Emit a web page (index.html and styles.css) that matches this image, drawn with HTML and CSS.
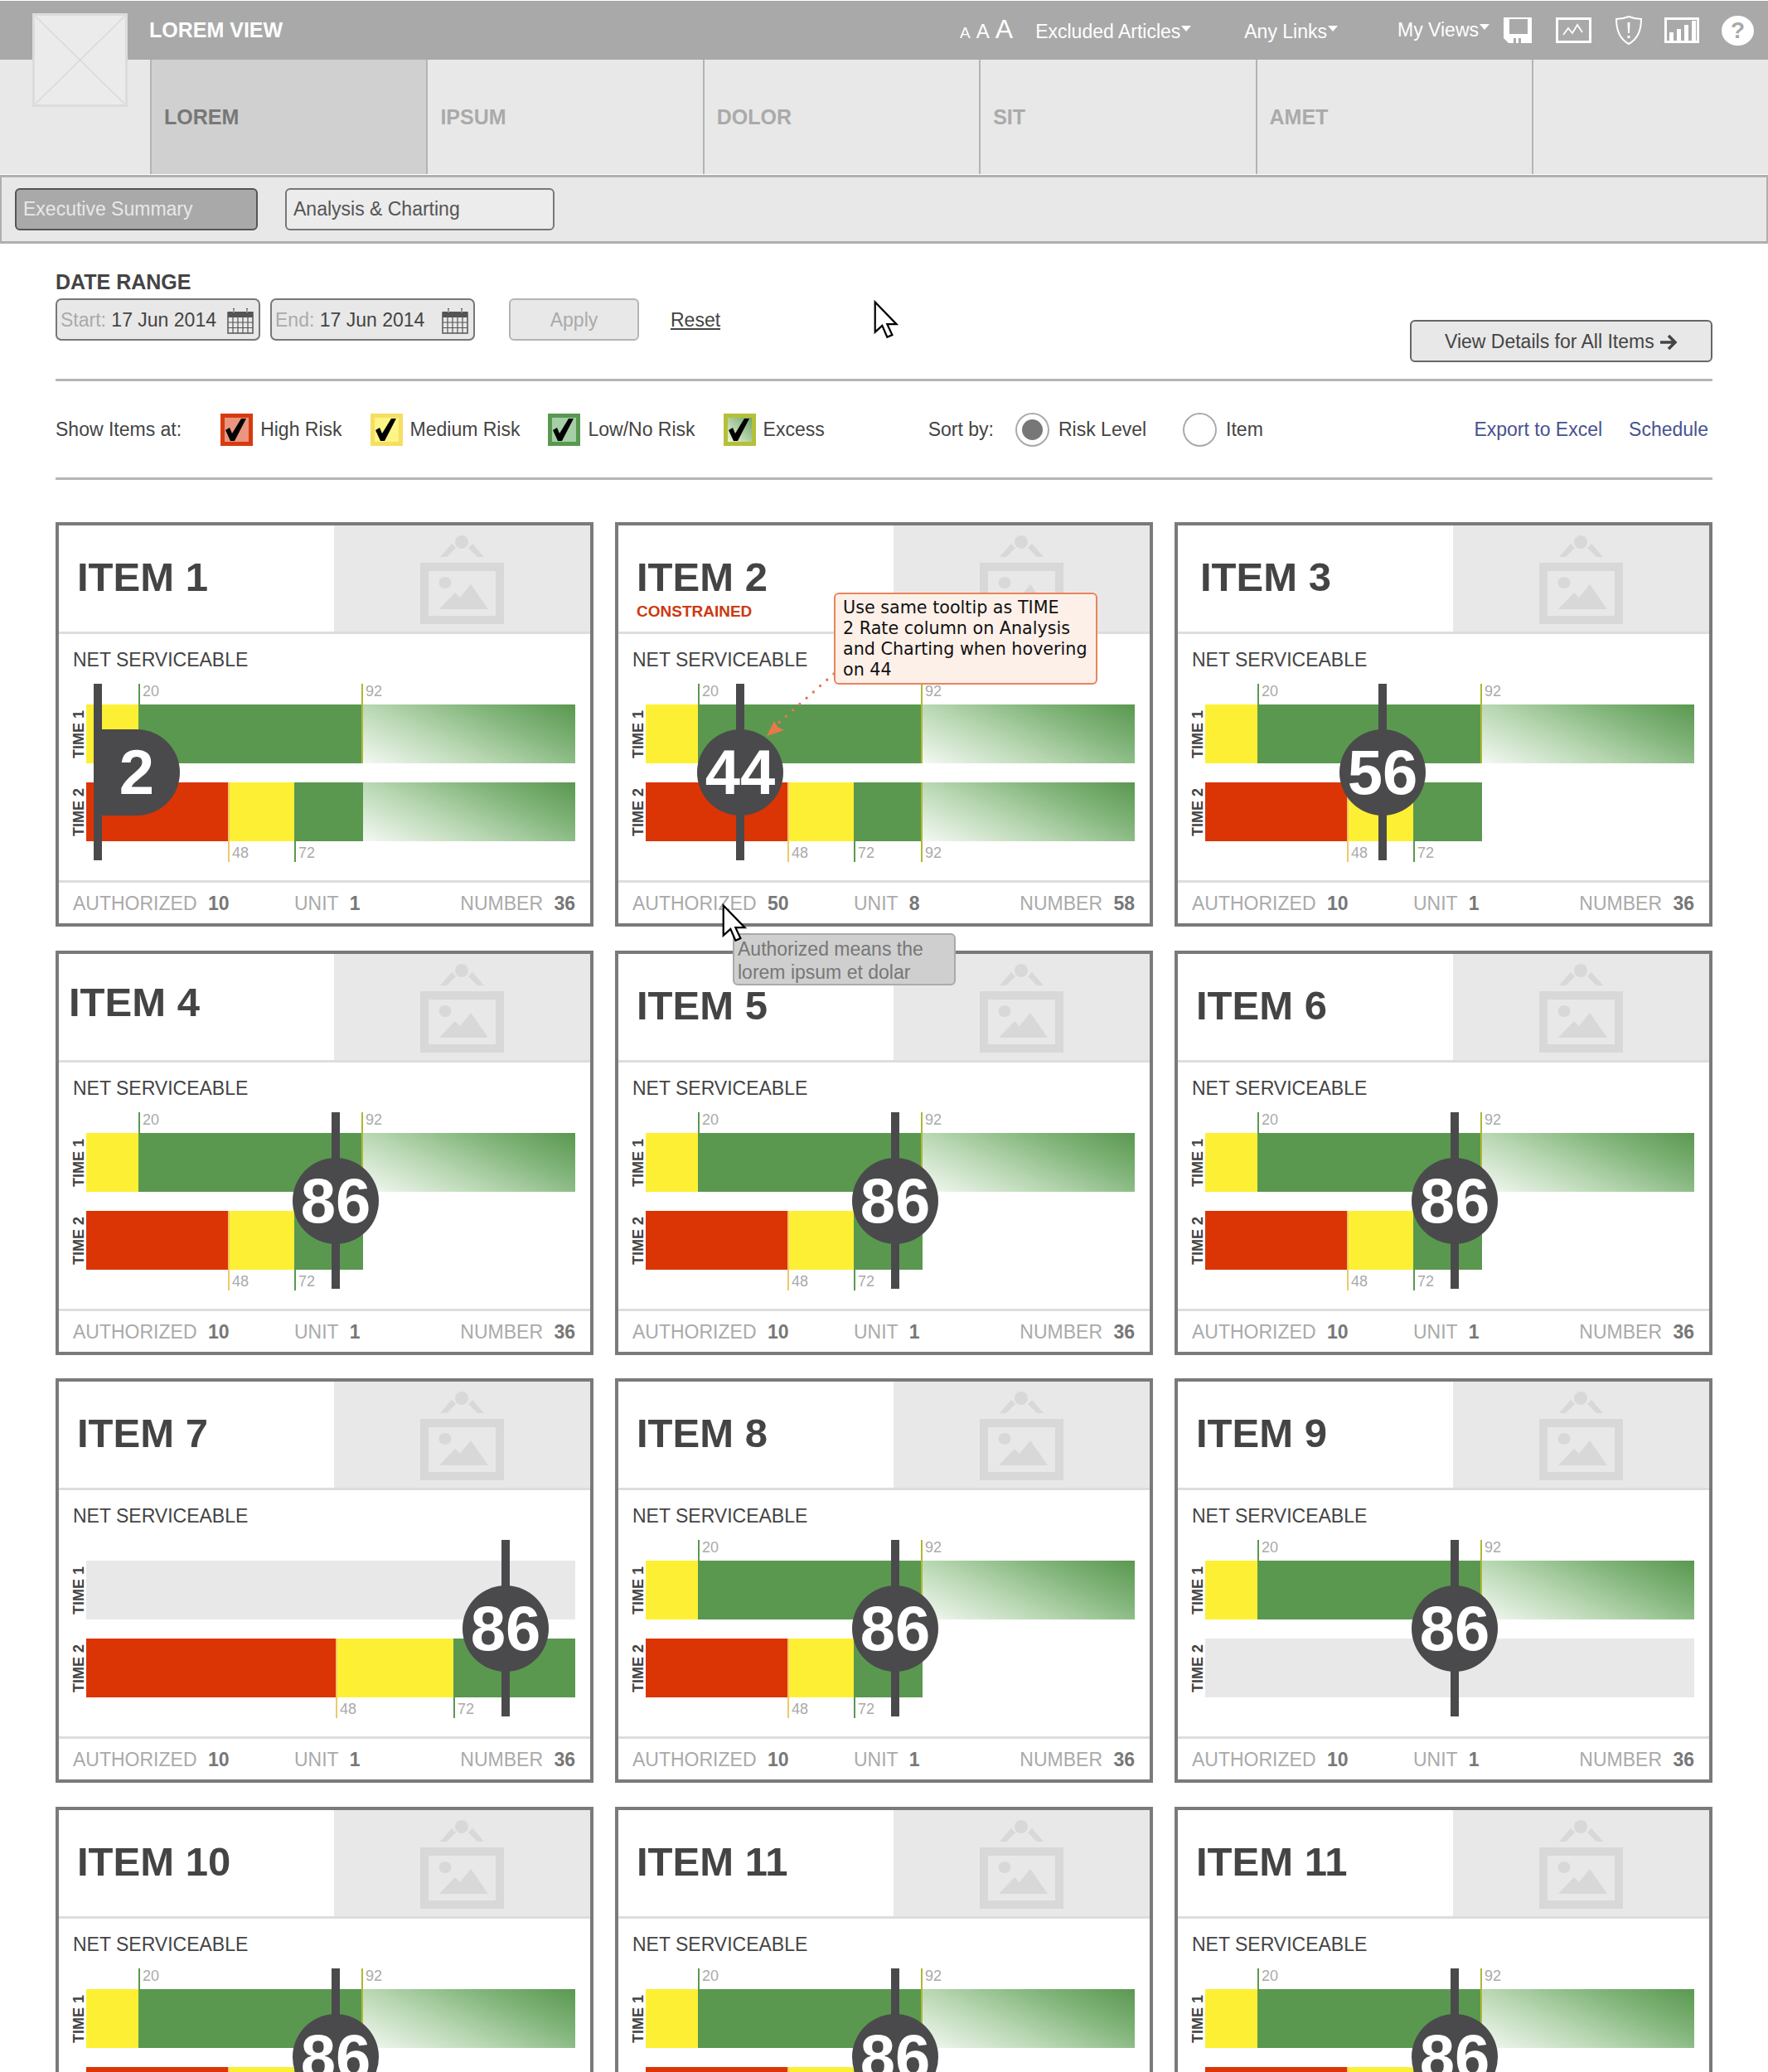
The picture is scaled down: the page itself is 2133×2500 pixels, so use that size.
FILE: index.html
```html
<!DOCTYPE html>
<html>
<head>
    <title>Lorem View</title>
    <meta charset="utf-8">
    <link rel="stylesheet" href="styles.css">
</head>
<body>
<svg class="defs" width="0" height="0">
    <symbol id="picture" viewBox="0 0 101 112">
        <circle cx="50" cy="12" r="8"/>
        <path d="M24 30 L38 14 L43 19 L32 30 Z M77 30 L63 14 L58 19 L69 30 Z"/>
        <path fill-rule="evenodd" d="M0 37 H101 V111 H0 Z M10 47 V101 H91 V47 Z"/>
        <ellipse cx="30" cy="61" rx="7.5" ry="7"/>
        <path d="M23 93 L42 73 L48 79 L61 63 L82 93 Z"/>
    </symbol>
    <symbol id="calendar" viewBox="0 0 32 32">
        <path d="M1 6 H31 V31 H1 Z" fill="#e8e8e8" stroke="#555" stroke-width="1.5"/>
        <path d="M1 5 H31 V12 H1 Z" fill="#555"/>
        <path d="M8 1 V7 M24 1 V7" stroke="#555" stroke-width="2"/>
        <path d="M8 2 V6 M24 2 V6" stroke="#e8e8e8" stroke-width="1"/>
        <path d="M1 18 H31 M1 24.500 H31 M7 12 V31 M13 12 V31 M19 12 V31 M25 12 V31" stroke="#555" stroke-width="1.200"/>
    </symbol>
    <symbol id="check" viewBox="0 0 29 29">
        <path d="M1 15 L6 12 L9 19 L20 1 L26 1 L12 28 L7 28 Z"/>
    </symbol>
    <symbol id="cursor" viewBox="0 0 18 27">
        <path d="M1 1 V22 L6 17.500 L9.500 25.500 L13 24 L9.500 16.500 H16 Z" fill="#fff" stroke="#000" stroke-width="1.300"/>
    </symbol>
</svg>

<div class="page">
    <div class="logo">
        <svg viewBox="0 0 115 113" preserveAspectRatio="none"><path d="M0 0 L115 113 M115 0 L0 113" stroke="#d8d8d8" stroke-width="1.500"/></svg>
    </div>

    <div class="topbar">
        <div class="app-name">LOREM VIEW</div>
        <div class="topbar-right">
            <div class="text-size"><span class="a-small">A</span><span class="a-mid">A</span><span class="a-big">A</span></div>
            <a class="menu menu-excluded">Excluded Articles<i class="caret"></i></a>
            <a class="menu menu-links">Any Links<i class="caret"></i></a>
            <a class="menu menu-views">My Views<i class="caret"></i></a>
            <svg class="icon icon-save" width="34" height="31" viewBox="0 0 34 31">
                <path d="M0 0 H34 V31 H6 L0 25 Z" fill="#fff"/>
                <rect x="7" y="2" width="22" height="18" fill="#a9a9a9"/>
                <rect x="12" y="25" width="3" height="6" fill="#a9a9a9"/>
                <rect x="18" y="25" width="3" height="6" fill="#a9a9a9"/>
            </svg>
            <svg class="icon icon-chart" width="43" height="31" viewBox="0 0 43 31">
                <rect x="1.500" y="1.500" width="40" height="28" fill="none" stroke="#fff" stroke-width="3"/>
                <path d="M9 21 L15 13 L20 19 L26 9 L32 18" fill="none" stroke="#fff" stroke-width="1.800"/>
            </svg>
            <svg class="icon icon-shield" width="32" height="35" viewBox="0 0 32 35">
                <path d="M16 1 C21 3 26 4 31 4 C31 17 27 28 16 34 C5 28 1 17 1 4 C6 4 11 3 16 1 Z" fill="none" stroke="#fff" stroke-width="2"/>
                <path d="M14.500 8 H17.500 L17 21 H15 Z M14.500 24 H17.500 V27 H14.500 Z" fill="#fff"/>
            </svg>
            <svg class="icon icon-bars" width="42" height="31" viewBox="0 0 42 31">
                <rect x="1.500" y="1.500" width="39" height="28" fill="none" stroke="#fff" stroke-width="3"/>
                <path d="M6 18 H11 V29 H6 Z M15 14 H20 V29 H15 Z M24 9 H29 V29 H24 Z M33 4 H38 V29 H33 Z" fill="#fff"/>
            </svg>
            <div class="help">?</div>
        </div>
    </div>

    <div class="tabs">
        <div class="tab active">LOREM</div>
        <div class="tab">IPSUM</div>
        <div class="tab">DOLOR</div>
        <div class="tab">SIT</div>
        <div class="tab">AMET</div>
    </div>

    <div class="subnav">
        <button class="subnav-btn selected">Executive Summary</button>
        <button class="subnav-btn plain">Analysis &amp; Charting</button>
    </div>

    <div class="content">
        <div class="date-section">
            <div>
                <div class="date-title">DATE RANGE</div>
                <div class="date-row">
                    <div class="date-field start"><span class="date-hint">Start:</span> 17 Jun 2014<svg class="cal"><use href="#calendar"/></svg></div>
                    <div class="date-field end"><span class="date-hint">End:</span> 17 Jun 2014<svg class="cal"><use href="#calendar"/></svg></div>
                    <button class="apply-btn">Apply</button>
                    <a class="reset-link">Reset</a>
                </div>
            </div>
            <button class="details-btn">View Details for All Items
                <svg width="22" height="20" viewBox="0 0 22 20"><path d="M1 10 H19 M11 2 L19 10 L11 18" fill="none" stroke="#444" stroke-width="3.500"/></svg>
            </button>
        </div>

        <div class="filter-row">
            <span class="filter-label">Show Items at:</span>
            <span class="check check-high"><svg><use href="#check"/></svg></span><span class="check-text text-high">High Risk</span>
            <span class="check check-medium"><svg><use href="#check"/></svg></span><span class="check-text text-medium">Medium Risk</span>
            <span class="check check-low"><svg><use href="#check"/></svg></span><span class="check-text text-low">Low/No Risk</span>
            <span class="check check-excess"><svg><use href="#check"/></svg></span><span class="check-text text-excess">Excess</span>
            <span class="sort-label">Sort by:</span>
            <span class="radio on"></span><span class="radio-text">Risk Level</span>
            <span class="radio radio-item"></span><span class="radio-text">Item</span>
            <a class="action export">Export to Excel</a>
            <a class="action schedule">Schedule</a>
        </div>

        <div class="card-grid">
            <div class="card">
                <div class="card-head"><div class="card-title"><div class="item-name">ITEM 1</div></div><div class="card-pic"><svg><use href="#picture"/></svg></div></div>
                <div class="net-label">NET SERVICEABLE</div>
                <div class="chart">
                    <div class="time-labels"><span>TIME 1</span><span>TIME 2</span></div>
                    <div class="plot">
                        <div class="bar"><i class="seg yellow t1"></i><i class="seg green t1"></i><i class="seg fade"></i></div>
                        <div class="bar"><i class="seg red t2"></i><i class="seg yellow t2"></i><i class="seg green t2"></i><i class="seg fade"></i></div>
                        <span class="tick tick-20">20</span><span class="tick tick-92">92</span><span class="tick tick-48">48</span><span class="tick tick-72">72</span>
                        <div class="pin pin-edge" style="left: 14px"><div class="bulb">2</div></div>
                    </div>
                </div>
                <div class="card-foot"><span class="auth">AUTHORIZED <b>10</b></span><span>UNIT <b>1</b></span><span class="number">NUMBER <b>36</b></span></div>
            </div>

            <div class="card">
                <div class="card-head"><div class="card-title"><div class="item-name">ITEM 2</div><div class="constrained">CONSTRAINED</div></div><div class="card-pic"><svg><use href="#picture"/></svg></div></div>
                <div class="net-label">NET SERVICEABLE</div>
                <div class="chart">
                    <div class="time-labels"><span>TIME 1</span><span>TIME 2</span></div>
                    <div class="plot">
                        <div class="bar"><i class="seg yellow t1"></i><i class="seg green t1"></i><i class="seg fade"></i></div>
                        <div class="bar"><i class="seg red t2"></i><i class="seg yellow t2"></i><i class="seg green t2"></i><i class="seg fade"></i></div>
                        <span class="tick tick-20">20</span><span class="tick tick-92">92</span><span class="tick tick-48">48</span><span class="tick tick-72">72</span><span class="tick tick-92b">92</span>
                        <div class="pin" style="left: 114px"><div class="bulb">44</div></div>
                    </div>
                </div>
                <div class="card-foot"><span class="auth">AUTHORIZED <b>50</b></span><span>UNIT <b>8</b></span><span class="number">NUMBER <b>58</b></span></div>
            </div>

            <div class="card">
                <div class="card-head"><div class="card-title"><div class="item-name shift-right">ITEM 3</div></div><div class="card-pic"><svg><use href="#picture"/></svg></div></div>
                <div class="net-label">NET SERVICEABLE</div>
                <div class="chart">
                    <div class="time-labels"><span>TIME 1</span><span>TIME 2</span></div>
                    <div class="plot">
                        <div class="bar"><i class="seg yellow t1"></i><i class="seg green t1"></i><i class="seg fade"></i></div>
                        <div class="bar"><i class="seg red t2"></i><i class="seg yellow t2"></i><i class="seg green t2"></i></div>
                        <span class="tick tick-20">20</span><span class="tick tick-92">92</span><span class="tick tick-48">48</span><span class="tick tick-72">72</span>
                        <div class="pin" style="left: 214px"><div class="bulb">56</div></div>
                    </div>
                </div>
                <div class="card-foot"><span class="auth">AUTHORIZED <b>10</b></span><span>UNIT <b>1</b></span><span class="number">NUMBER <b>36</b></span></div>
            </div>

            <div class="card">
                <div class="card-head"><div class="card-title"><div class="item-name shift-up">ITEM 4</div></div><div class="card-pic"><svg><use href="#picture"/></svg></div></div>
                <div class="net-label">NET SERVICEABLE</div>
                <div class="chart">
                    <div class="time-labels"><span>TIME 1</span><span>TIME 2</span></div>
                    <div class="plot">
                        <div class="bar"><i class="seg yellow t1"></i><i class="seg green t1"></i><i class="seg fade"></i></div>
                        <div class="bar"><i class="seg red t2"></i><i class="seg yellow t2"></i><i class="seg green t2"></i></div>
                        <span class="tick tick-20">20</span><span class="tick tick-92">92</span><span class="tick tick-48">48</span><span class="tick tick-72">72</span>
                        <div class="pin" style="left: 301px"><div class="bulb">86</div></div>
                    </div>
                </div>
                <div class="card-foot"><span class="auth">AUTHORIZED <b>10</b></span><span>UNIT <b>1</b></span><span class="number">NUMBER <b>36</b></span></div>
            </div>

            <div class="card">
                <div class="card-head"><div class="card-title"><div class="item-name">ITEM 5</div></div><div class="card-pic"><svg><use href="#picture"/></svg></div></div>
                <div class="net-label">NET SERVICEABLE</div>
                <div class="chart">
                    <div class="time-labels"><span>TIME 1</span><span>TIME 2</span></div>
                    <div class="plot">
                        <div class="bar"><i class="seg yellow t1"></i><i class="seg green t1"></i><i class="seg fade"></i></div>
                        <div class="bar"><i class="seg red t2"></i><i class="seg yellow t2"></i><i class="seg green t2"></i></div>
                        <span class="tick tick-20">20</span><span class="tick tick-92">92</span><span class="tick tick-48">48</span><span class="tick tick-72">72</span>
                        <div class="pin" style="left: 301px"><div class="bulb">86</div></div>
                    </div>
                </div>
                <div class="card-foot"><span class="auth">AUTHORIZED <b>10</b></span><span>UNIT <b>1</b></span><span class="number">NUMBER <b>36</b></span></div>
            </div>

            <div class="card">
                <div class="card-head"><div class="card-title"><div class="item-name">ITEM 6</div></div><div class="card-pic"><svg><use href="#picture"/></svg></div></div>
                <div class="net-label">NET SERVICEABLE</div>
                <div class="chart">
                    <div class="time-labels"><span>TIME 1</span><span>TIME 2</span></div>
                    <div class="plot">
                        <div class="bar"><i class="seg yellow t1"></i><i class="seg green t1"></i><i class="seg fade"></i></div>
                        <div class="bar"><i class="seg red t2"></i><i class="seg yellow t2"></i><i class="seg green t2"></i></div>
                        <span class="tick tick-20">20</span><span class="tick tick-92">92</span><span class="tick tick-48">48</span><span class="tick tick-72">72</span>
                        <div class="pin" style="left: 301px"><div class="bulb">86</div></div>
                    </div>
                </div>
                <div class="card-foot"><span class="auth">AUTHORIZED <b>10</b></span><span>UNIT <b>1</b></span><span class="number">NUMBER <b>36</b></span></div>
            </div>

            <div class="card">
                <div class="card-head"><div class="card-title"><div class="item-name">ITEM 7</div></div><div class="card-pic"><svg><use href="#picture"/></svg></div></div>
                <div class="net-label">NET SERVICEABLE</div>
                <div class="chart">
                    <div class="time-labels"><span>TIME 1</span><span>TIME 2</span></div>
                    <div class="plot">
                        <div class="bar empty"></div>
                        <div class="bar"><i class="seg red" style="width: 301px"></i><i class="seg yellow" style="width: 142px"></i><i class="seg green" style="width: 147px"></i></div>
                        <span class="tick tick-48" style="left: 301px">48</span><span class="tick tick-72" style="left: 443px">72</span>
                        <div class="pin" style="left: 506px"><div class="bulb">86</div></div>
                    </div>
                </div>
                <div class="card-foot"><span class="auth">AUTHORIZED <b>10</b></span><span>UNIT <b>1</b></span><span class="number">NUMBER <b>36</b></span></div>
            </div>

            <div class="card">
                <div class="card-head"><div class="card-title"><div class="item-name">ITEM 8</div></div><div class="card-pic"><svg><use href="#picture"/></svg></div></div>
                <div class="net-label">NET SERVICEABLE</div>
                <div class="chart">
                    <div class="time-labels"><span>TIME 1</span><span>TIME 2</span></div>
                    <div class="plot">
                        <div class="bar"><i class="seg yellow t1"></i><i class="seg green t1"></i><i class="seg fade"></i></div>
                        <div class="bar"><i class="seg red t2"></i><i class="seg yellow t2"></i><i class="seg green t2"></i></div>
                        <span class="tick tick-20">20</span><span class="tick tick-92">92</span><span class="tick tick-48">48</span><span class="tick tick-72">72</span>
                        <div class="pin" style="left: 301px"><div class="bulb">86</div></div>
                    </div>
                </div>
                <div class="card-foot"><span class="auth">AUTHORIZED <b>10</b></span><span>UNIT <b>1</b></span><span class="number">NUMBER <b>36</b></span></div>
            </div>

            <div class="card">
                <div class="card-head"><div class="card-title"><div class="item-name">ITEM 9</div></div><div class="card-pic"><svg><use href="#picture"/></svg></div></div>
                <div class="net-label">NET SERVICEABLE</div>
                <div class="chart">
                    <div class="time-labels"><span>TIME 1</span><span>TIME 2</span></div>
                    <div class="plot">
                        <div class="bar"><i class="seg yellow t1"></i><i class="seg green t1"></i><i class="seg fade"></i></div>
                        <div class="bar empty"></div>
                        <span class="tick tick-20">20</span><span class="tick tick-92">92</span>
                        <div class="pin" style="left: 301px"><div class="bulb">86</div></div>
                    </div>
                </div>
                <div class="card-foot"><span class="auth">AUTHORIZED <b>10</b></span><span>UNIT <b>1</b></span><span class="number">NUMBER <b>36</b></span></div>
            </div>

            <div class="card">
                <div class="card-head"><div class="card-title"><div class="item-name">ITEM 10</div></div><div class="card-pic"><svg><use href="#picture"/></svg></div></div>
                <div class="net-label">NET SERVICEABLE</div>
                <div class="chart">
                    <div class="time-labels"><span>TIME 1</span><span>TIME 2</span></div>
                    <div class="plot">
                        <div class="bar"><i class="seg yellow t1"></i><i class="seg green t1"></i><i class="seg fade"></i></div>
                        <div class="bar"><i class="seg red t2"></i><i class="seg yellow t2"></i><i class="seg green t2"></i></div>
                        <span class="tick tick-20">20</span><span class="tick tick-92">92</span><span class="tick tick-48">48</span><span class="tick tick-72">72</span>
                        <div class="pin" style="left: 301px"><div class="bulb">86</div></div>
                    </div>
                </div>
                <div class="card-foot"><span class="auth">AUTHORIZED <b>10</b></span><span>UNIT <b>1</b></span><span class="number">NUMBER <b>36</b></span></div>
            </div>

            <div class="card">
                <div class="card-head"><div class="card-title"><div class="item-name">ITEM 11</div></div><div class="card-pic"><svg><use href="#picture"/></svg></div></div>
                <div class="net-label">NET SERVICEABLE</div>
                <div class="chart">
                    <div class="time-labels"><span>TIME 1</span><span>TIME 2</span></div>
                    <div class="plot">
                        <div class="bar"><i class="seg yellow t1"></i><i class="seg green t1"></i><i class="seg fade"></i></div>
                        <div class="bar"><i class="seg red t2"></i><i class="seg yellow t2"></i><i class="seg green t2"></i></div>
                        <span class="tick tick-20">20</span><span class="tick tick-92">92</span><span class="tick tick-48">48</span><span class="tick tick-72">72</span>
                        <div class="pin" style="left: 301px"><div class="bulb">86</div></div>
                    </div>
                </div>
                <div class="card-foot"><span class="auth">AUTHORIZED <b>10</b></span><span>UNIT <b>1</b></span><span class="number">NUMBER <b>36</b></span></div>
            </div>

            <div class="card">
                <div class="card-head"><div class="card-title"><div class="item-name">ITEM 11</div></div><div class="card-pic"><svg><use href="#picture"/></svg></div></div>
                <div class="net-label">NET SERVICEABLE</div>
                <div class="chart">
                    <div class="time-labels"><span>TIME 1</span><span>TIME 2</span></div>
                    <div class="plot">
                        <div class="bar"><i class="seg yellow t1"></i><i class="seg green t1"></i><i class="seg fade"></i></div>
                        <div class="bar"><i class="seg red t2"></i><i class="seg yellow t2"></i><i class="seg green t2"></i></div>
                        <span class="tick tick-20">20</span><span class="tick tick-92">92</span><span class="tick tick-48">48</span><span class="tick tick-72">72</span>
                        <div class="pin" style="left: 301px"><div class="bulb">86</div></div>
                    </div>
                </div>
                <div class="card-foot"><span class="auth">AUTHORIZED <b>10</b></span><span>UNIT <b>1</b></span><span class="number">NUMBER <b>36</b></span></div>
            </div>
        </div>
    </div>

    <!-- annotations lying over the cards -->
    <svg class="note-arrow" width="95" height="90" viewBox="0 0 95 90">
        <path d="M86 8 L14 72" fill="none" stroke="#e8794a" stroke-width="3.500" stroke-linecap="round" stroke-dasharray="0 11"/>
        <path d="M5 83 L14 65 L18 72 L26 76 Z" fill="#e8794a"/>
    </svg>
    <div class="note">Use same tooltip as TIME<br>2 Rate column on Analysis<br>and Charting when hovering<br>on 44</div>
    <div class="hint">Authorized means the<br>lorem ipsum et dolar</div>
    <svg class="cursor cursor-top"><use href="#cursor"/></svg>
    <svg class="cursor cursor-card"><use href="#cursor"/></svg>
</div>
</body>
</html>
```

FILE: styles.css
```css
* {
    box-sizing: border-box;
}
body {
    margin: 0;
    font-family: "Liberation Sans", Arial, sans-serif;
    color: #444;
    background-color: white;
}
.defs {
    position: absolute;
}
.page {
    position: relative;
    width: 2133px;
    height: 2500px;
    overflow: hidden;
    padding-top: 1px;
}
button {
    font-family: inherit;
}

/* top bar */
.logo {
    position: absolute;
    left: 39px;
    top: 16px;
    width: 115px;
    height: 113px;
    background-color: #ebebeb;
    border: 3px solid #dcdcdc;
}
.logo svg {
    display: block;
    width: 100%;
    height: 100%;
}
.topbar {
    display: flex;
    align-items: center;
    height: 71px;
    padding-left: 180px;
    background-color: #a9a9a9;
    color: white;
}
.app-name {
    font-size: 25px;
    font-weight: bold;
}
.topbar-right {
    display: flex;
    align-items: center;
    margin-left: auto;
    padding-right: 17px;
}
.text-size {
    display: flex;
    align-items: baseline;
    gap: 7px;
    margin-top: -2px;
}
.a-small {
    font-size: 19px;
}
.a-mid {
    font-size: 24px;
}
.a-big {
    font-size: 32px;
}
.menu {
    position: relative;
    font-size: 23px;
    display: flex;
    align-items: flex-start;
}
.menu-excluded {
    margin-left: 27px;
    margin-top: 3px;
}
.menu-links {
    margin-left: 64px;
    margin-top: 3px;
}
.menu-views {
    margin-left: 72px;
}
.caret {
    width: 0;
    height: 0;
    margin-top: 6px;
    margin-left: 1px;
    border-left: 6px solid transparent;
    border-right: 6px solid transparent;
    border-top: 7px solid white;
}
.icon {
    display: block;
    flex: none;
}
.icon-save {
    margin-left: 17px;
}
.icon-chart {
    margin-left: 29px;
}
.icon-shield {
    margin-left: 29px;
}
.icon-bars {
    margin-left: 27px;
}
.help {
    width: 39px;
    height: 36px;
    margin-left: 27px;
    border-radius: 50%;
    background-color: white;
    color: #a9a9a9;
    font-size: 28px;
    font-weight: bold;
    line-height: 36px;
    text-align: center;
}

/* tabs */
.tabs {
    display: flex;
    height: 138px;
    padding-left: 181px;
    background-color: #e8e8e8;
}
.tab {
    width: 333.400px;
    padding: 55px 0 0 15px;
    border-left: 2px solid #b4b4b4;
    color: #aaa;
    font-size: 25px;
    font-weight: bold;
}
.tab:last-child {
    border-right: 2px solid #b4b4b4;
    width: 335px;
}
.tab.active {
    background-color: #d0d0d0;
    color: #777;
}

.subnav {
    display: flex;
    gap: 33px;
    height: 83px;
    margin-top: 1px;
    padding: 13px 0 0 16px;
    background-color: #e8e8e8;
    border: 3px solid #b0b0b0;
    border-left-width: 2px;
    border-right-width: 2px;
}
.subnav-btn {
    height: 51px;
    padding: 0 0 0 8px;
    border-radius: 6px;
    font-size: 23px;
    text-align: left;
}
.subnav-btn.selected {
    width: 293px;
    background-color: #a9a9a9;
    border: 2px solid #555;
    color: #e8e8e8;
}
.subnav-btn.plain {
    width: 325px;
    background-color: #ececec;
    border: 2px solid #777;
    color: #555;
}

/* date range */
.content {
    padding: 0 67px;
}
.date-section {
    display: flex;
    align-items: flex-start;
    justify-content: space-between;
    height: 166px;
    padding-top: 31px;
    border-bottom: 3px solid #b5b5b5;
}
.date-title {
    height: 35px;
    font-size: 25px;
    font-weight: bold;
    line-height: 30px;
}
.date-row {
    display: flex;
    align-items: center;
}
.date-field {
    display: flex;
    align-items: center;
    height: 51px;
    padding: 2px 0 0 4px;
    background-color: #e8e8e8;
    border: 2px solid #777;
    border-radius: 7px;
    font-size: 23px;
    white-space: pre;
}
.date-field.start {
    width: 247px;
}
.date-field.end {
    width: 247px;
    margin-left: 12px;
}
.date-hint {
    color: #aaa;
}
.cal {
    width: 32px;
    height: 32px;
    margin-left: auto;
    margin-right: 6px;
}
.apply-btn {
    width: 157px;
    height: 51px;
    margin-left: 41px;
    padding: 2px 0 0;
    background-color: #e8e8e8;
    border: 2px solid #b5b5b5;
    border-radius: 6px;
    color: #aaa;
    font-size: 23px;
}
.reset-link {
    margin-left: 38px;
    padding-top: 2px;
    font-size: 23px;
    text-decoration: underline;
}
.details-btn {
    display: flex;
    align-items: center;
    gap: 6px;
    width: 365px;
    height: 51px;
    margin-top: 61px;
    padding: 2px 0 0 40px;
    background-color: #e8e8e8;
    border: 2px solid #666;
    border-radius: 6px;
    color: #444;
    font-size: 23px;
}

/* filters */
.filter-row {
    display: flex;
    align-items: center;
    height: 119px;
    border-bottom: 3px solid #b5b5b5;
    font-size: 23px;
}
.check {
    flex: none;
    width: 39px;
    height: 39px;
    border: 5px solid;
}
.check svg {
    display: block;
    width: 29px;
    height: 29px;
}
.check-high {
    margin-left: 47px;
    border-color: #d83a10;
    background-color: #e99580;
}
.check-medium {
    margin-left: 34px;
    border-color: #f6de62;
    background-color: #fdf585;
}
.check-low {
    margin-left: 34px;
    border-color: #5a9850;
    background-color: #a6cfa8;
}
.check-excess {
    margin-left: 34px;
    border-color: #b4c038;
    background-image: linear-gradient(to top right, #eef5dd, #6fa56a);
}
.check-text {
    margin-left: 9px;
}
.sort-label {
    margin-left: 125px;
}
.radio {
    flex: none;
    display: flex;
    align-items: center;
    justify-content: center;
    width: 41px;
    height: 41px;
    margin-left: 26px;
    margin-right: 11px;
    border: 2px solid #aaa;
    border-radius: 50%;
}
.radio.on::after {
    content: "";
    width: 25px;
    height: 25px;
    border-radius: 50%;
    background-color: #777;
}
.radio-item {
    margin-left: 44px;
}
.action {
    color: #46528f;
}
.export {
    margin-left: auto;
}
.schedule {
    margin-left: 32px;
    margin-right: 5px;
}

/* item cards */
.card-grid {
    display: grid;
    grid-template-columns: repeat(3, 649px);
    grid-auto-rows: 488px;
    gap: 28.500px 26px;
    margin-top: 51px;
}
.card {
    border: 4px solid #7a7a7a;
    background-color: white;
}
.card-head {
    display: flex;
    height: 131px;
    border-bottom: 3px solid #ddd;
}
.card-title {
    flex: 1;
    padding: 38px 0 0 22px;
}
.item-name {
    font-size: 49px;
    font-weight: bold;
    line-height: 48px;
    white-space: nowrap;
}
.shift-right {
    padding-left: 5px;
}
.shift-up {
    margin: -4px 0 0 -10px;
}
.constrained {
    margin-top: 9px;
    color: #cc3a10;
    font-size: 19px;
    font-weight: bold;
    line-height: 18px;
}
.card-pic {
    display: flex;
    align-items: center;
    justify-content: center;
    width: 309px;
    background-color: #e8e8e8;
}
.card-pic svg {
    width: 101px;
    height: 112px;
    fill: #d8d8d8;
}
.net-label {
    margin: 18px 0 16px 17px;
    font-size: 23px;
    line-height: 26px;
}
.chart {
    display: flex;
    height: 215px;
    margin-left: 17px;
}
.time-labels {
    flex: none;
    display: flex;
    flex-direction: column;
    gap: 23px;
    width: 16px;
    padding-top: 25px;
}
.time-labels span {
    height: 71px;
    writing-mode: vertical-rl;
    transform: rotate(180deg);
    font-size: 18px;
    font-weight: bold;
    line-height: 15px;
    text-align: center;
}
.plot {
    position: relative;
    width: 590px;
    padding-top: 25px;
}
.bar {
    display: flex;
    height: 71px;
    margin-bottom: 23px;
}
.bar.empty {
    background-color: #e8e8e8;
}
.seg {
    display: block;
    height: 100%;
}
.seg.yellow {
    background-color: #fdf034;
}
.seg.green {
    background-color: #5a9850;
}
.seg.red {
    background-color: #dc3505;
}
.seg.fade {
    flex: 1;
    background-image: linear-gradient(25deg, #f4f9f3 0%, #b5d5af 40%, #82b57b 70%, #5a9850 100%);
}
.yellow.t1 {
    width: 63px;
}
.green.t1 {
    width: 269px;
}
.red.t2 {
    width: 171px;
}
.yellow.t2 {
    width: 80px;
}
.green.t2 {
    width: 83px;
}

/* ticks sit on top of the bars, label to the right of the line */
.tick {
    position: absolute;
    padding-left: 3px;
    border-left: 2px solid;
    color: #aaa;
    font-size: 18px;
}
.tick-20 {
    left: 63px;
    top: 0;
    height: 25px;
    border-color: #5a9850;
    line-height: 19px;
}
.tick-92 {
    left: 332px;
    top: 0;
    height: 96px;
    border-color: #adb832;
    line-height: 19px;
}
.tick-48, .tick-72, .tick-92b {
    top: 119px;
    height: 96px;
    padding-top: 74px;
    line-height: 22px;
}
.tick-48 {
    left: 171px;
    border-color: #f0c868;
}
.tick-72 {
    left: 251px;
    border-color: #5a9850;
}
.tick-92b {
    left: 332px;
    border-color: #adb832;
}
.pin {
    position: absolute;
    top: 0;
    width: 10px;
    height: 213px;
    margin-left: -5px;
    background-color: #4a4a4c;
}
.bulb {
    position: absolute;
    left: -47px;
    top: 55px;
    width: 104px;
    height: 104px;
    border-radius: 50%;
    background-color: #4a4a4c;
    color: white;
    font-size: 76px;
    font-weight: bold;
    line-height: 104px;
    text-align: center;
}
.pin-edge .bulb {
    left: 0;
    border-radius: 0 52px 52px 0;
}
.card-foot {
    display: flex;
    align-items: center;
    height: 52px;
    margin-top: 22px;
    padding: 2px 18px 0 17px;
    border-top: 3px solid #ddd;
    color: #aaa;
    font-size: 23px;
    white-space: pre;
}
.card-foot b {
    margin-left: 7px;
    color: #777;
}
.auth {
    width: 267px;
}
.number {
    margin-left: auto;
}

/* overlays */
.note {
    position: absolute;
    left: 1006px;
    top: 715px;
    width: 318px;
    height: 111px;
    padding: 4px 0 0 9px;
    background-color: #fdf0e9;
    border: 2px solid #e8845c;
    border-radius: 6px;
    color: #111;
    font-family: "DejaVu Sans", Verdana, sans-serif;
    font-size: 20.700px;
    line-height: 25px;
    white-space: nowrap;
}
.note-arrow {
    position: absolute;
    left: 920px;
    top: 805px;
}
.hint {
    position: absolute;
    left: 884px;
    top: 1126px;
    width: 269px;
    height: 63px;
    padding: 3px 0 0 4px;
    background-color: #cfcfcf;
    border: 2px solid #aaa;
    border-radius: 6px;
    color: #777;
    font-size: 23px;
    line-height: 28px;
}
.cursor {
    position: absolute;
    width: 31px;
    height: 48px;
}
.cursor-top {
    left: 1054px;
    top: 362px;
}
.cursor-card {
    left: 871px;
    top: 1090px;
}
```
